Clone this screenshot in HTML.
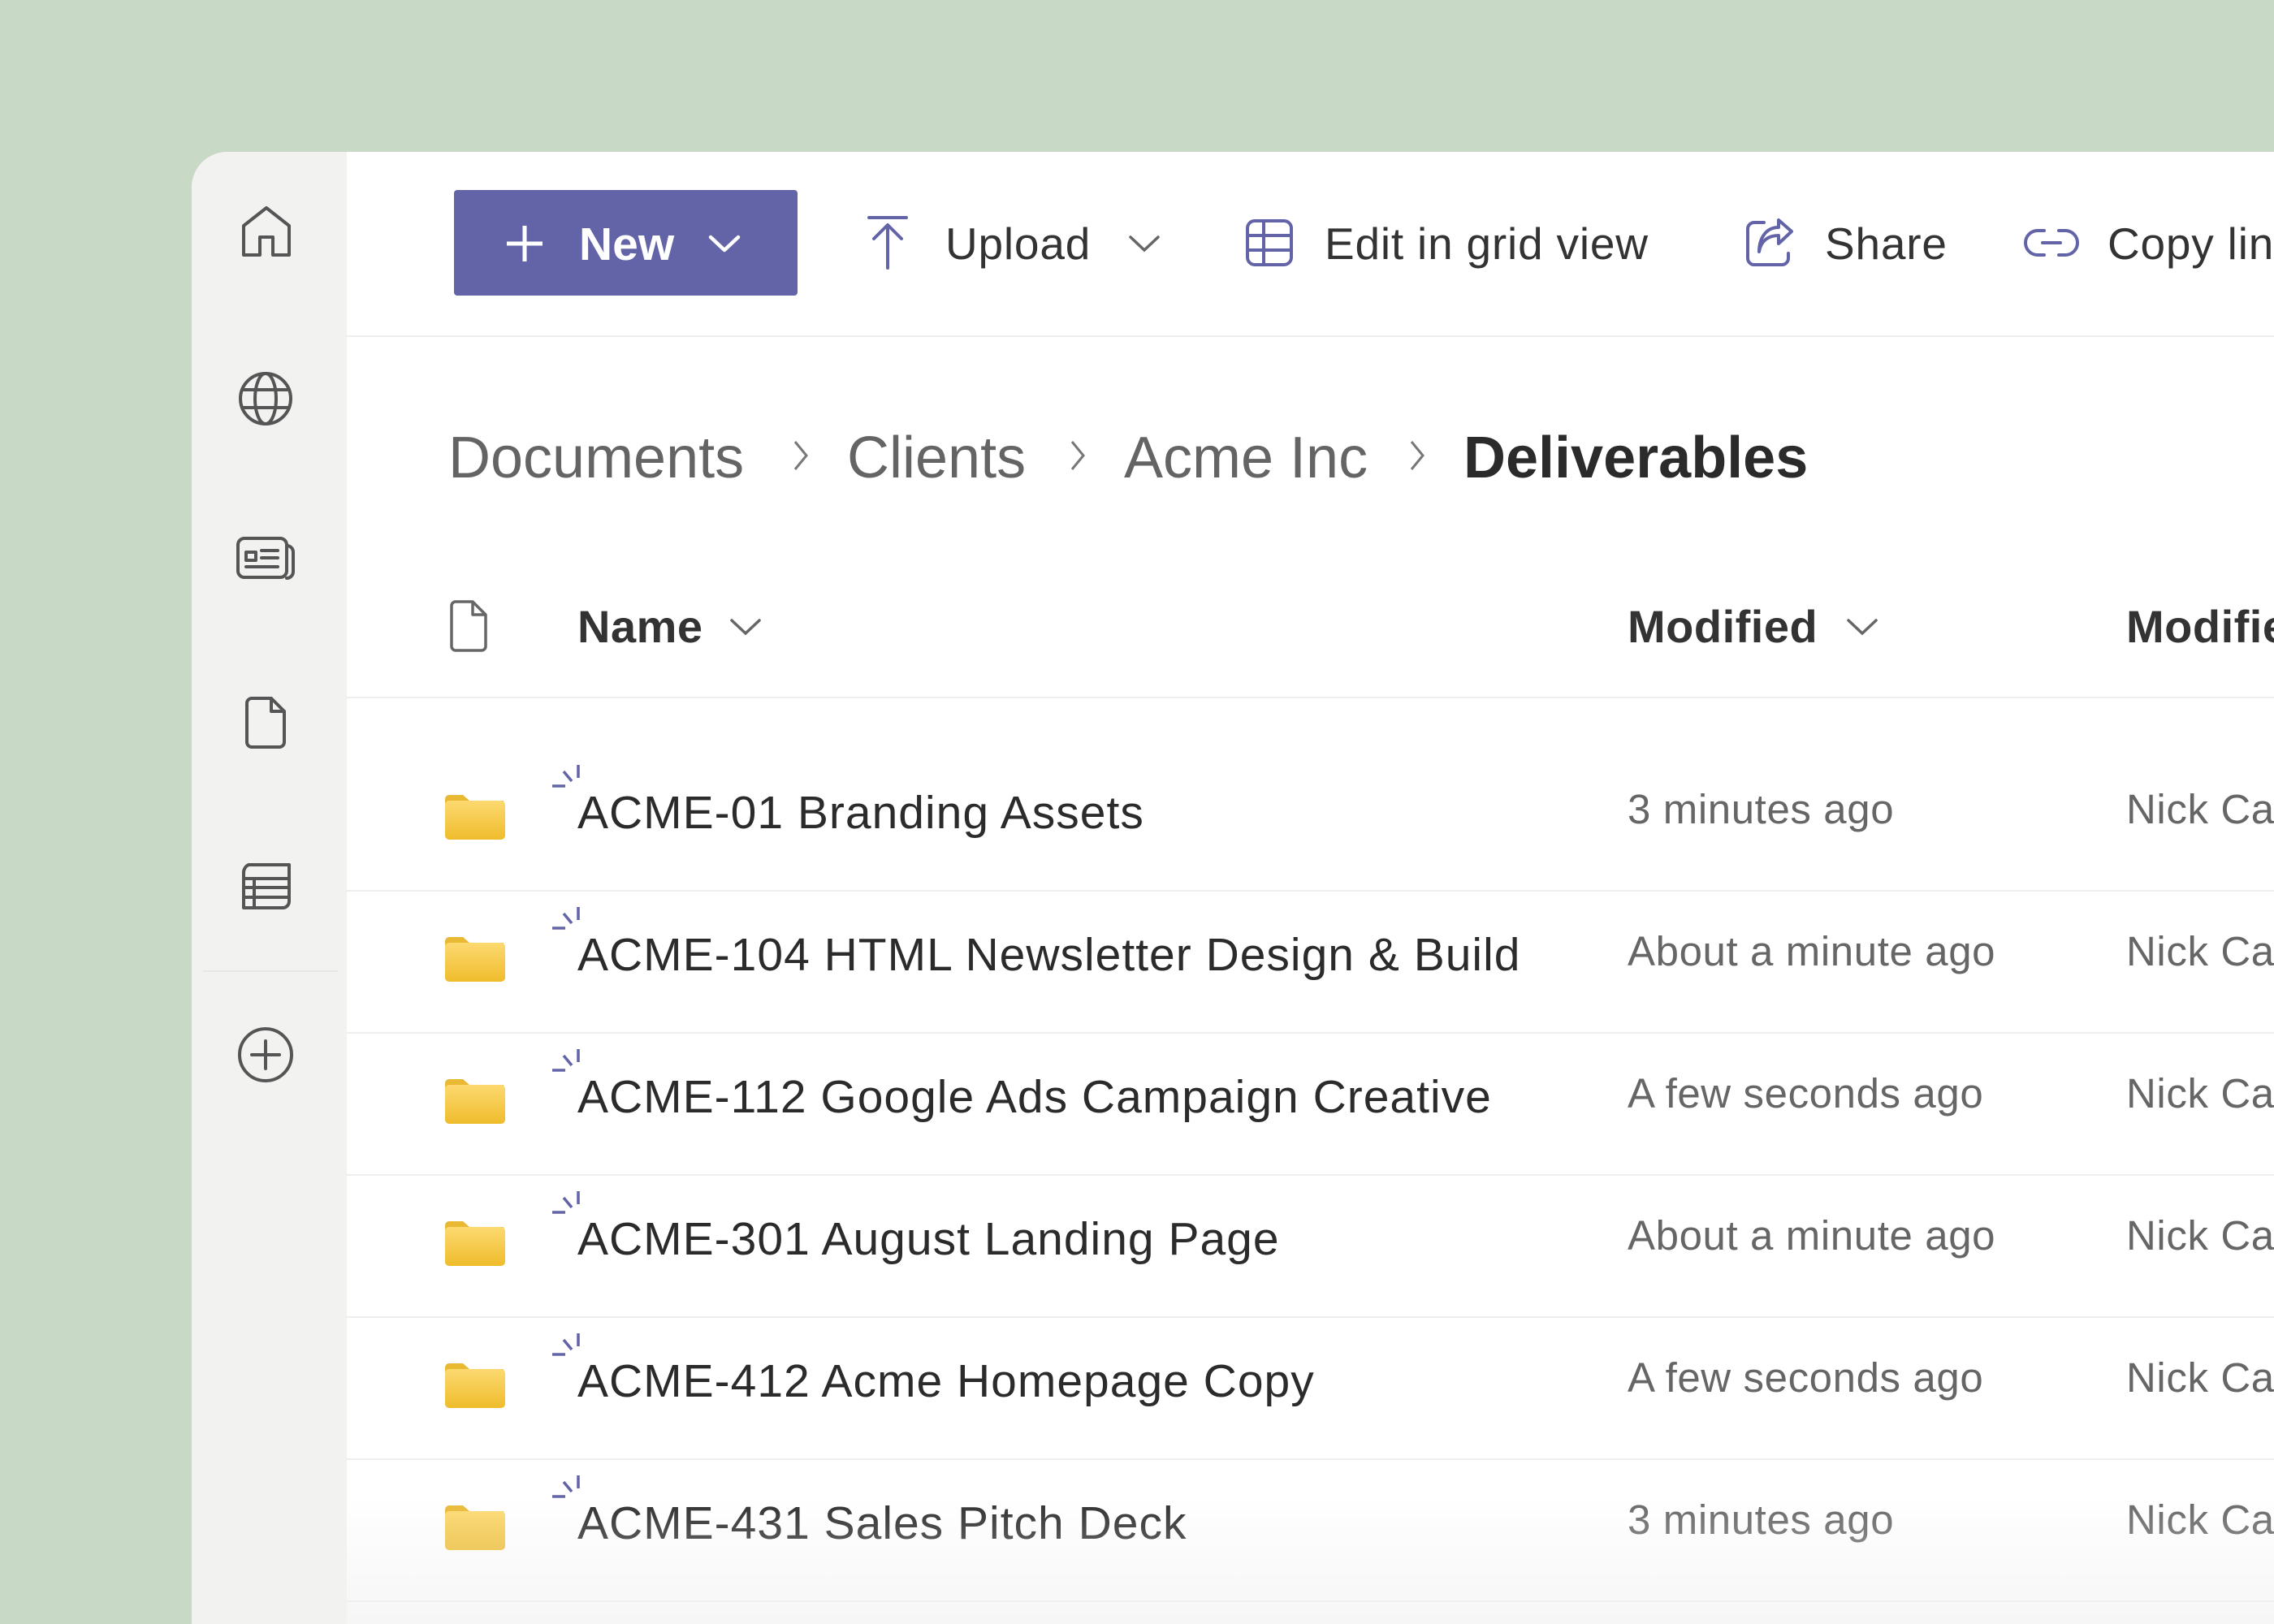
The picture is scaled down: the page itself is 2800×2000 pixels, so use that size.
<!DOCTYPE html>
<html><head><meta charset="utf-8">
<style>
*{margin:0;padding:0;box-sizing:border-box}
html{width:2800px;height:2000px;overflow:hidden}
body{width:2800px;height:2000px;background:#c8d9c6;position:relative;overflow:hidden;font-family:"Liberation Sans",sans-serif}
.panel{position:absolute;left:236px;top:187px;width:2564px;height:1813px;background:#fff;border-top-left-radius:44px;overflow:hidden}
.side{position:absolute;left:0;top:0;width:191px;height:100%;background:#f2f2f1}
.a{position:absolute;white-space:nowrap;line-height:1}
svg{position:absolute;overflow:visible}
.ic{fill:none;stroke:#555;stroke-width:4;stroke-linecap:round;stroke-linejoin:round}
.pu{fill:none;stroke:#6264a7;stroke-width:4;stroke-linecap:round;stroke-linejoin:round}
.tb{font-size:55px;color:#333;letter-spacing:0.8px}
.bc{font-size:72px;color:#646464}
.nm{font-size:57px;color:#2b2b2b;letter-spacing:1px}
.dt{font-size:51px;color:#666;letter-spacing:0.6px}
.line{position:absolute;left:191px;right:0;height:2px;background:#eeeeee}
.fade{position:absolute;right:0;top:1840px;height:160px;background:linear-gradient(rgba(255,255,255,0),rgba(240,240,240,0.6))}
</style></head><body>
<div class="panel">
<div class="side"></div>
<div style="position:absolute;left:14px;top:1008px;width:166px;height:2px;background:#e6e6e6"></div>
</div>

<svg style="left:296px;top:252px" width="64" height="68"><path class="ic" d="M4 62V26L32 4L60 26V62H40V40H24V62Z"/></svg>
<svg style="left:292px;top:456px" width="70" height="70"><g class="ic"><circle cx="35" cy="35" r="31"/><ellipse cx="35" cy="35" rx="13" ry="31"/><path d="M6 24H64M6 46H64"/></g></svg>
<svg style="left:290px;top:660px" width="74" height="54"><g class="ic"><rect x="3" y="3" width="60" height="48" rx="8"/><path d="M63 12a8 8 0 0 1 8 8v24a8 8 0 0 1-8 8"/><rect x="13" y="20" width="12" height="10"/><path d="M32 18H52M32 27H52M13 38H52"/></g></svg>
<svg style="left:300px;top:856px" width="54" height="68"><path class="ic" d="M4 10a6 6 0 0 1 6-6H34L50 20V58a6 6 0 0 1-6 6H10a6 6 0 0 1-6-6Z M34 4V20H50"/></svg>
<svg style="left:296px;top:1062px" width="64" height="60"><g class="ic"><path d="M10 3H60V48a8 8 0 0 1-8 8H4V14a11 11 0 0 1 6-11Z"/><path d="M4 20H60M4 31H60M4 43H60M17 20V56"/></g></svg>
<svg style="left:292px;top:1264px" width="70" height="70"><g class="ic"><circle cx="35" cy="35" r="32"/><path d="M35 18V52M18 35H52"/></g></svg>

<div style="position:absolute;left:559px;top:234px;width:423px;height:130px;background:#6264a7;border-radius:4px"></div>
<svg style="left:622px;top:276px" width="48" height="48"><path d="M24 2V46M2 24H46" stroke="#fff" stroke-width="5" fill="none"/></svg>
<div class="a" style="left:713px;top:273px;font-size:57px;color:#fff;font-weight:bold">New</div>
<svg style="left:872px;top:288px" width="40" height="24"><path d="M3 4L20 20L37 4" stroke="#fff" stroke-width="4.5" fill="none" stroke-linecap="round" stroke-linejoin="round"/></svg>

<svg style="left:1066px;top:264px" width="56" height="70"><path class="pu" d="M4 4H50M27 66V14M10 30L27 13L44 30"/></svg>
<div class="a tb" style="left:1164px;top:273px">Upload</div>
<svg style="left:1389px;top:288px" width="40" height="24"><path d="M3 4L20 20L37 4" stroke="#666" stroke-width="3.5" fill="none" stroke-linecap="round"/></svg>

<svg style="left:1533px;top:269px" width="60" height="60"><g class="pu"><rect x="3" y="3" width="54" height="54" rx="9"/><path d="M3 21H57M3 39H57M23 3V57"/></g></svg>
<div class="a tb" style="left:1631px;top:273px">Edit in grid view</div>

<svg style="left:2148px;top:268px" width="64" height="62"><g class="pu"><path d="M24 6H12a8 8 0 0 0-8 8V50a8 8 0 0 0 8 8H46a8 8 0 0 0 8-8V44"/><path d="M18 42C20 28 30 22 42 22V32L58 17L42 3V12C26 12 18 26 18 42Z"/></g></svg>
<div class="a tb" style="left:2247px;top:273px">Share</div>

<svg style="left:2493px;top:280px" width="66" height="38"><g class="pu"><path d="M24 4H16a13 13 0 0 0 0 30H24M42 4H50a13 13 0 0 1 0 30H42M22 19H44"/></g></svg>
<div class="a tb" style="left:2595px;top:273px">Copy link</div>

<div class="line" style="top:413px;left:427px"></div>

<div class="a bc" style="left:552px;top:528px">Documents</div>
<svg style="left:976px;top:541px" width="20" height="40"><path d="M3 3L17 20L3 37" stroke="#777" stroke-width="3" fill="none"/></svg>
<div class="a bc" style="left:1043px;top:528px">Clients</div>
<svg style="left:1317px;top:541px" width="20" height="40"><path d="M3 3L17 20L3 37" stroke="#777" stroke-width="3" fill="none"/></svg>
<div class="a bc" style="left:1384px;top:528px">Acme Inc</div>
<svg style="left:1735px;top:541px" width="20" height="40"><path d="M3 3L17 20L3 37" stroke="#777" stroke-width="3" fill="none"/></svg>
<div class="a bc" style="left:1802px;top:528px;color:#2b2b2b;font-weight:bold">Deliverables</div>

<svg style="left:552px;top:738px" width="50" height="68"><path d="M4 8a5 5 0 0 1 5-5H30L46 19V58a5 5 0 0 1-5 5H9a5 5 0 0 1-5-5Z M30 3V19H46" fill="none" stroke="#666" stroke-width="3.5" stroke-linejoin="round"/></svg>
<div class="a nm" style="left:711px;top:744px;font-weight:bold;font-size:56px;color:#333;letter-spacing:0.5px">Name</div>
<svg style="left:898px;top:760px" width="40" height="24"><path d="M3 4L20 20L37 4" stroke="#666" stroke-width="3.5" fill="none" stroke-linecap="round"/></svg>
<div class="a nm" style="left:2004px;top:744px;font-weight:bold;font-size:56px;color:#333;letter-spacing:0.5px">Modified</div>
<svg style="left:2273px;top:760px" width="40" height="24"><path d="M3 4L20 20L37 4" stroke="#666" stroke-width="3.5" fill="none" stroke-linecap="round"/></svg>
<div class="a nm" style="left:2618px;top:744px;font-weight:bold;font-size:56px;color:#333;letter-spacing:0.5px">Modified By</div>
<div class="line" style="top:858px;left:427px"></div>

<div id="rows"></div>
<div class="fade" style="left:427px"></div>

<script>
var rows=[["ACME-01 Branding Assets","3 minutes ago"],["ACME-104 HTML Newsletter Design &amp; Build","About a minute ago"],["ACME-112 Google Ads Campaign Creative","A few seconds ago"],["ACME-301 August Landing Page","About a minute ago"],["ACME-412 Acme Homepage Copy","A few seconds ago"],["ACME-431 Sales Pitch Deck","3 minutes ago"]];
var h="";
rows.forEach(function(r,i){
 var c=1002+i*175;
 h+='<svg style="left:548px;top:'+(c-24)+'px" width="76" height="58"><defs><linearGradient id="g'+i+'" x1="0" y1="0" x2="0" y2="1"><stop offset="0" stop-color="#fcd970"/><stop offset="1" stop-color="#efbc2c"/></linearGradient></defs><path d="M0 6a5 5 0 0 1 5-5H22L30 8H72V12H0Z" fill="#e9b934"/><rect x="0" y="8" width="74" height="48" rx="5" fill="url(#g'+i+')"/></svg>';
 h+='<svg style="left:678px;top:'+(c-64)+'px" width="40" height="40"><path d="M34 4V20M16 12L26 24M2 30H18" stroke="#6264a7" stroke-width="3.5" fill="none"/></svg>';
 h+='<div class="a nm" style="left:711px;top:'+(c-29)+'px">'+r[0]+'</div>';
 h+='<div class="a dt" style="left:2004px;top:'+(c-31)+'px">'+r[1]+'</div>';
 h+='<div class="a dt" style="left:2618px;top:'+(c-31)+'px">Nick Cave</div>';
 h+='<div class="line" style="left:427px;top:'+(1096+i*175)+'px"></div>';
});
document.getElementById("rows").outerHTML=h;
</script>
</body></html>
